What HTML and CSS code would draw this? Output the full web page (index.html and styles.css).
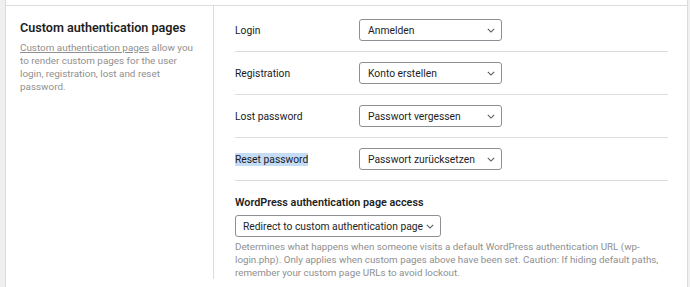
FILE: index.html
```html
<!DOCTYPE html>
<html lang="en">
<head>
<meta charset="UTF-8" />
<meta name="viewport" content="width=device-width, initial-scale=1.0"/>
<title>Custom authentication pages</title>
<link rel="stylesheet" href="styles.css">
</head>
<body>

<div class="settings-card">
    <div class="prev-row"></div>

    <div class="settings-row">
        <div class="settings-info">
            <h2>Custom authentication pages</h2>
            <p><a href="#">Custom authentication pages</a> allow you to render custom pages for the user login, registration, lost and reset password.</p>
        </div>

        <div class="settings-fields">
            <div class="field-row first">
                <label>Login</label>
                <div class="select-box">
                    <span>Anmelden</span>
                    <svg class="chevron" viewBox="0 0 10 6"><path d="M1 1l4 4 4-4"/></svg>
                </div>
            </div>
            <div class="field-row">
                <label>Registration</label>
                <div class="select-box">
                    <span>Konto erstellen</span>
                    <svg class="chevron" viewBox="0 0 10 6"><path d="M1 1l4 4 4-4"/></svg>
                </div>
            </div>
            <div class="field-row">
                <label>Lost password</label>
                <div class="select-box">
                    <span>Passwort vergessen</span>
                    <svg class="chevron" viewBox="0 0 10 6"><path d="M1 1l4 4 4-4"/></svg>
                </div>
            </div>
            <div class="field-row">
                <label><span class="selected-text">Reset password</span></label>
                <div class="select-box">
                    <span>Passwort zurücksetzen</span>
                    <svg class="chevron" viewBox="0 0 10 6"><path d="M1 1l4 4 4-4"/></svg>
                </div>
            </div>

            <div class="access-block">
                <h3>WordPress authentication page access</h3>
                <div class="select-box wide">
                    <span>Redirect to custom authentication page</span>
                    <svg class="chevron" viewBox="0 0 10 6"><path d="M1 1l4 4 4-4"/></svg>
                </div>
                <p class="help">Determines what happens when someone visits a default WordPress authentication URL (wp-login.php). Only applies when custom pages above have been set. Caution: If hiding default paths, remember your custom page URLs to avoid lockout.</p>
            </div>
        </div>
    </div>
</div>

</body>
</html>
```

FILE: styles.css
```css
body {
    font-family: Roboto, "Noto Sans", sans-serif;
    margin: 0;
    padding-left: 5px;
    background: #f0f0f1;
    color: #1e1e1e;
    height: 287px;
    overflow: hidden;
}

.settings-card {
    width: 681px;
    background: #fff;
    border-left: 1px solid #dcdcde;
    border-right: 1px solid #dcdcde;
    min-height: 287px;
}

.prev-row {
    height: 5px;
}

.settings-row {
    display: flex;
    border-top: 1px solid #dcdcde;
}

.settings-info {
    width: 193px;
    padding: 14px 0 0 14px;
    border-right: 1px solid #dcdcde;
}

.settings-info h2 {
    font-size: 12.6px;
    font-weight: 600;
    line-height: 16px;
    margin: 0 0 5px;
}

.settings-info p {
    font-size: 9.9px;
    line-height: 13px;
    color: #8f8f8f;
    margin: 0;
    padding-right: 18px;
}

.settings-info a {
    color: #8f8f8f;
}

.settings-fields {
    flex: 1;
    padding: 0 19px 0 21px;
}

.field-row {
    display: flex;
    align-items: center;
    padding: 10px 0;
    border-bottom: 1px solid #dcdcde;
}

.field-row.first {
    padding-top: 13px;
}

.field-row label {
    width: 124px;
    font-size: 10.3px;
    color: #1a1a1a;
}

.selected-text {
    background: #c5dcf6;
}

.select-box {
    display: flex;
    align-items: center;
    justify-content: space-between;
    box-sizing: border-box;
    width: 143px;
    height: 22px;
    padding: 0 6px 0 8px;
    border: 1px solid #8c8f94;
    border-radius: 3px;
    font-size: 10.3px;
    white-space: nowrap;
    background: #fff;
}

.select-box.wide {
    width: 206px;
    padding-left: 7px;
}

.chevron {
    width: 8px;
    height: 5px;
    fill: none;
    stroke: #50575e;
    stroke-width: 1.3;
}

.access-block {
    padding-top: 15px;
}

.access-block h3 {
    font-size: 10.8px;
    font-weight: 600;
    margin: 0 0 6px;
}

.help {
    font-size: 9.8px;
    line-height: 13px;
    color: #8f8f8f;
    margin: 3px 0 0;
}
```
